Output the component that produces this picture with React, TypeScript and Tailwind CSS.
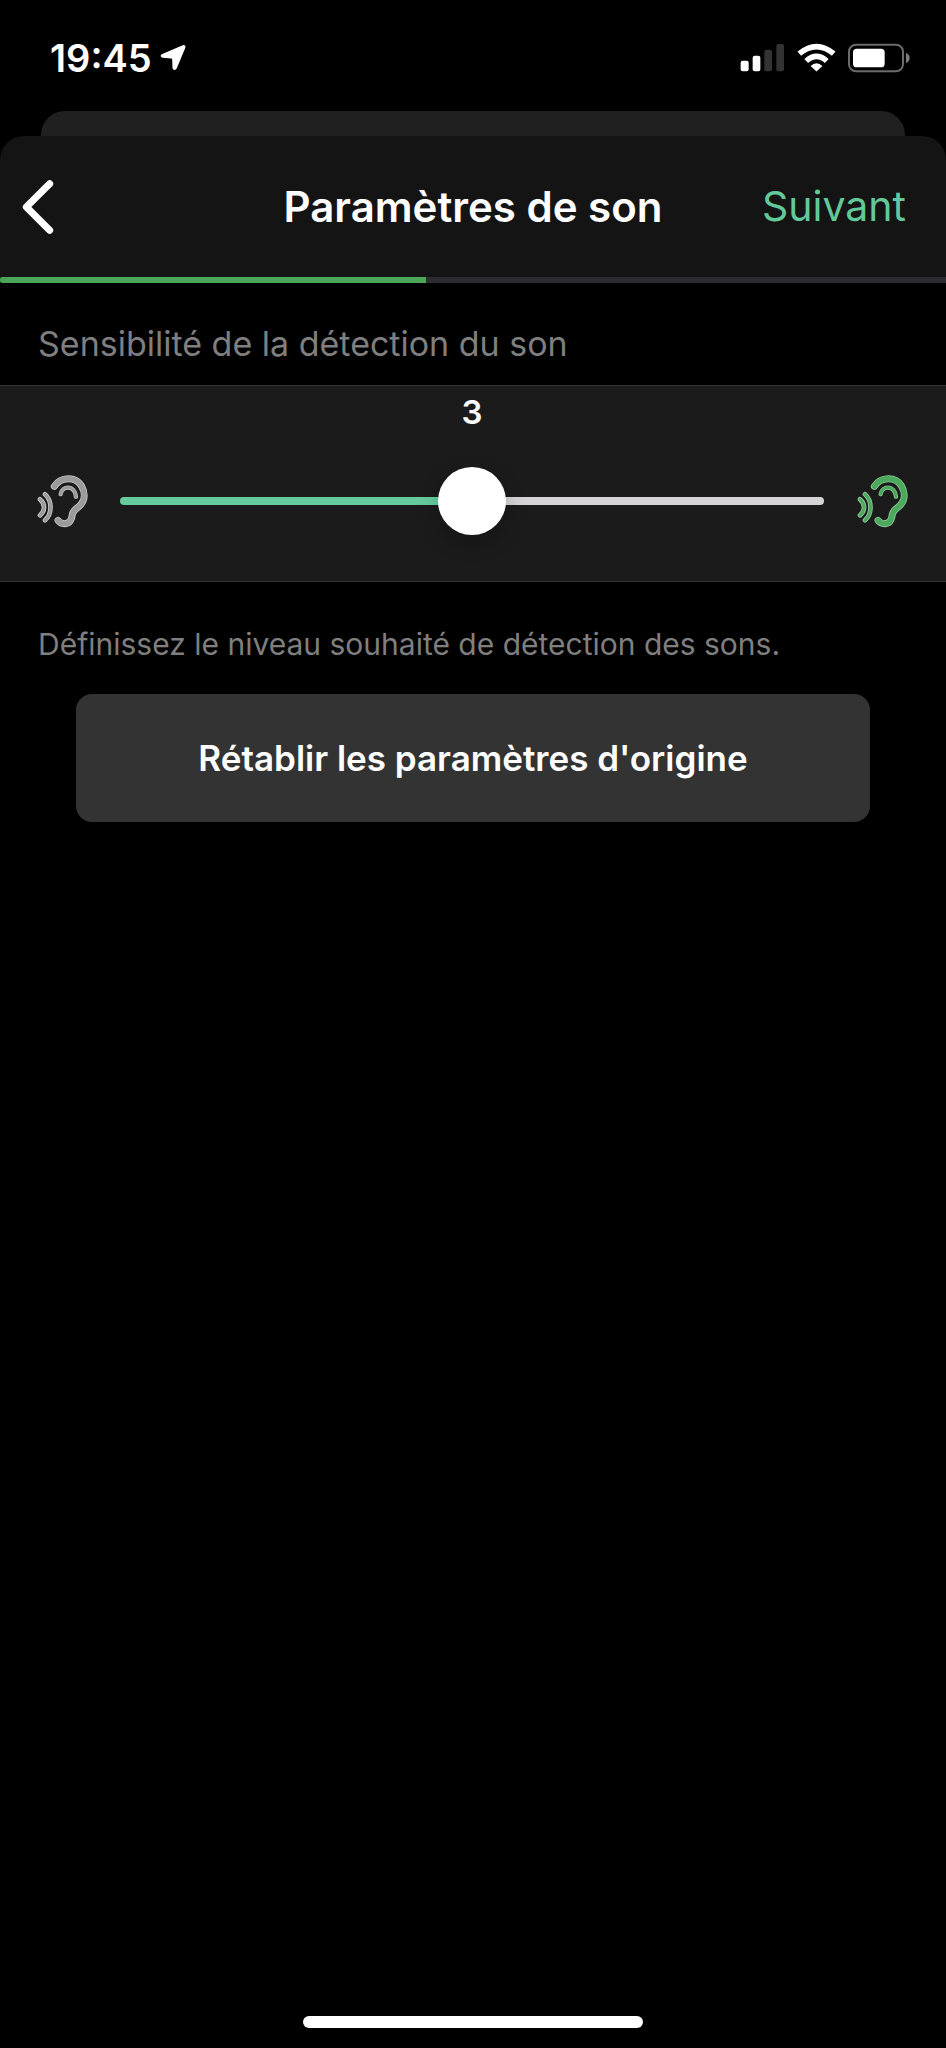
import { useState } from "react";

const EAR_PATHS = [
  { d: "M103 106C122 76 167 76 184 104C196 124 195 146 183 160C171 174 160 176 157 190C155 206 149 218 134 218C124 218 118 214 114 208", outer: 21, inner: 16 },
  { d: "M122 129C126 104 164 100 168 137", outer: 13, inner: 9 },
  { d: "M75 130C97 149 97 189 75 208", outer: 14, inner: 9 },
  { d: "M60 145C76 158 76 180 60 193", outer: 14, inner: 9 },
];

function EarIcon({ fill, outline }: { fill: string; outline: string }) {
  return (
    <svg viewBox="48 66 156 168" className="h-14 w-[52px] shrink-0" fill="none" strokeLinecap="round" aria-hidden="true">
      {EAR_PATHS.map((p) => (
        <g key={p.d}>
          <path d={p.d} stroke={outline} strokeWidth={p.outer} />
          <path d={p.d} stroke={fill} strokeWidth={p.inner} />
        </g>
      ))}
    </svg>
  );
}

function StatusBar() {
  return (
    <div className="flex h-[111px] items-center justify-between pt-1 pr-9 pl-[50px]">
      <div className="flex items-center gap-2">
        <span className="text-[38px] leading-none font-semibold">19:45</span>
        <svg viewBox="481 133 79 80" className="h-[27px] w-[26px]" fill="#fff" aria-hidden="true">
          <path d="M550 136Q560 133 558 143L532 206Q530 211 525 211Q520 211 519 205L518 179Q518 176 515 176L489 174Q483 173 483 168Q483 164 488 162Z" />
        </svg>
      </div>
      <div className="flex items-center gap-3">
        <svg viewBox="122 130 135 87" className="h-[29px] w-[45px]" aria-hidden="true">
          <rect x="124" y="183" width="24" height="32" rx="6" fill="#fff" />
          <rect x="160" y="168" width="23" height="47" rx="6" fill="#fff" />
          <rect x="195" y="150" width="23" height="65" rx="6" fill="#333" />
          <rect x="231" y="133" width="23" height="82" rx="6" fill="#333" />
        </svg>
        <svg viewBox="291 129 118 87" className="h-[29px] w-[39px]" fill="none" stroke="#fff" aria-hidden="true">
          <path d="M298 161Q350 118 402 161" strokeWidth="17" />
          <path d="M319 183Q350 155 381 183" strokeWidth="17" />
          <path d="M332 198Q350 182 368 198L350 215Z" fill="#fff" stroke="none" />
        </svg>
        <svg viewBox="445 129 186 90" className="h-[30px] w-[62px]" fill="none" aria-hidden="true">
          <rect x="448" y="134" width="162" height="80" rx="21" stroke="#6b6b6b" strokeWidth="6" />
          <rect x="460" y="146" width="95" height="56" rx="11" fill="#fff" />
          <path d="M619 159Q630 163 630 174Q630 185 619 189Z" fill="#7d7d7d" />
        </svg>
      </div>
    </div>
  );
}

export default function App() {
  const min = 1;
  const max = 5;
  const [level, setLevel] = useState(3);
  const percent = ((level - min) / (max - min)) * 100;

  return (
    <div className="flex min-h-screen flex-col bg-black font-['Inter','Liberation_Sans',sans-serif] text-white">
      <StatusBar />
      <div className="mx-[41px] h-[25px] rounded-t-3xl bg-[#202020]" />

      <header className="rounded-t-3xl bg-[#141414]">
        <div className="grid h-[141px] grid-cols-[1fr_auto_1fr] items-center">
          <button type="button" aria-label="Retour" className="justify-self-start pl-[22px]">
            <svg viewBox="66 541 94 162" className="h-[54px] w-8" fill="none" stroke="#fff" strokeWidth="21" strokeLinecap="round" strokeLinejoin="round" aria-hidden="true">
              <path d="M148 552L78 622L148 692" />
            </svg>
          </button>
          <h1 className="text-[42px] leading-none font-semibold">Paramètres de son</h1>
          <button type="button" className="justify-self-end pr-10 text-[41px] leading-none text-[#63c99b]">
            Suivant
          </button>
        </div>
        <div className="h-[6px] bg-[#2c2c2e]">
          <div className="h-full w-[45%] rounded-l-full bg-[#4ba65a]" />
        </div>
      </header>

      <main className="flex-1">
        <label htmlFor="sensitivity" className="block px-[38px] pt-[41px] pb-[21px] text-[34px] leading-10 text-[#7f7f7f]">
          Sensibilité de la détection du son
        </label>
        <section className="border-y border-[#333] bg-[#1b1b1b] pt-1.5 pr-[38px] pb-[46px] pl-9">
          <output htmlFor="sensitivity" className="block text-center text-[33px] leading-10 font-semibold">
            {level}
          </output>
          <div className="flex items-center gap-8 pt-[35px]">
            <EarIcon fill="#9b9b9b" outline="#c9c9c9" />
            <input
              id="sensitivity"
              type="range"
              min={min}
              max={max}
              value={level}
              onChange={(e) => setLevel(Number(e.target.value))}
              style={{ backgroundImage: `linear-gradient(to right, #65cb9d ${percent}%, #d5d3d5 ${percent}%)` }}
              className="my-[30px] h-2 min-w-0 flex-1 cursor-pointer appearance-none rounded-full [&::-webkit-slider-thumb]:size-[68px] [&::-webkit-slider-thumb]:appearance-none [&::-webkit-slider-thumb]:rounded-full [&::-webkit-slider-thumb]:bg-white [&::-webkit-slider-thumb]:shadow-[0_8px_24px_rgba(0,0,0,0.2)]"
            />
            <EarIcon fill="#4ba95c" outline="#93c99c" />
          </div>
        </section>
        <p className="px-[38px] pt-10 text-[30px] leading-[44px] text-[#7f7f7f]">
          Définissez le niveau souhaité de détection des sons.
        </p>
        <div className="px-[76px] pt-7">
          <button type="button" onClick={() => setLevel(3)} className="h-32 w-full rounded-2xl bg-[#333] text-[35px] font-semibold">
            Rétablir les paramètres d'origine
          </button>
        </div>
      </main>

      <footer className="flex justify-center pb-5">
        <div className="h-3 w-[36%] rounded-full bg-white" />
      </footer>
    </div>
  );
}
